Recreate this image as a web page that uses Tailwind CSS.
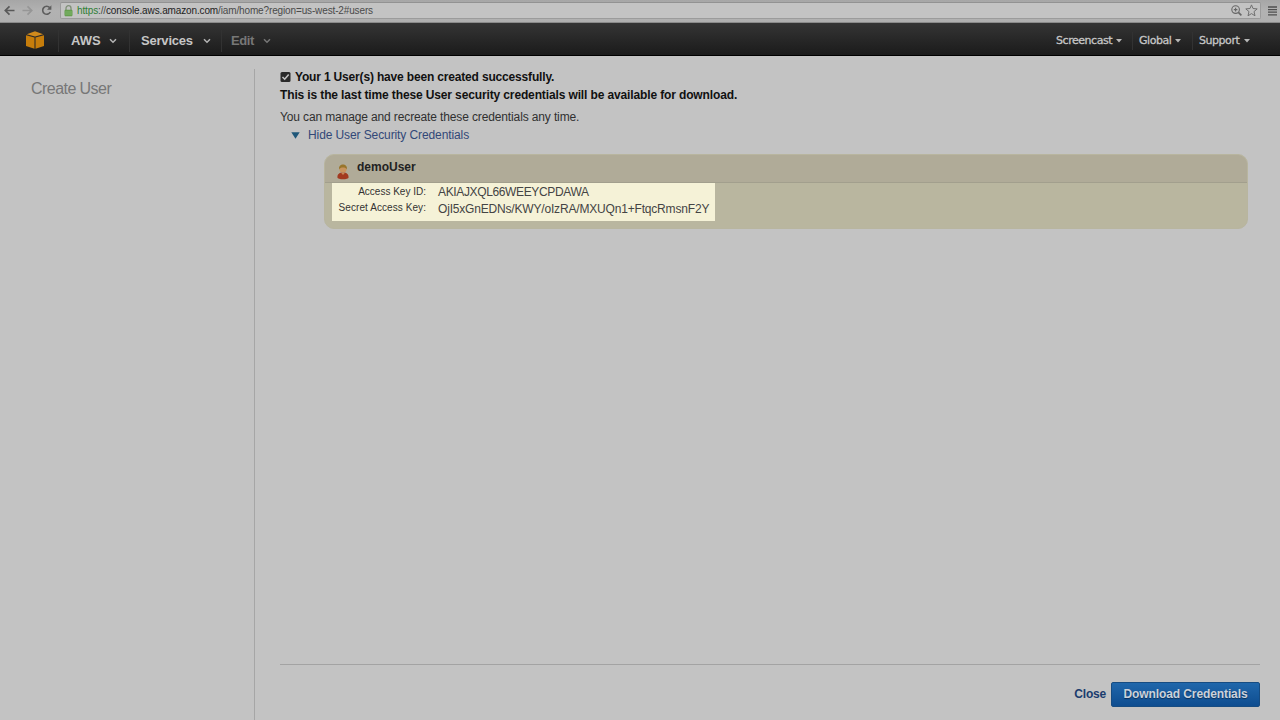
<!DOCTYPE html>
<html lang="en">
<head>
<meta charset="utf-8">
<title>IAM - Create User</title>
<script src="https://cdn.jsdelivr.net/npm/@tailwindcss/browser@4"></script>
</head>
<body class="w-[1280px] h-[720px] overflow-hidden bg-[#c3c3c3] flex flex-col font-['Liberation_Sans',Arial,sans-serif] text-[#222] whitespace-nowrap">
  <!-- Browser toolbar -->
  <div class="h-[23px] shrink-0 flex bg-gradient-to-b from-[#a6a6a6] via-[#b2b2b2] to-[#b0b0b0] border-b border-[#8b8b8b]">
    <div class="w-[60px] flex pl-[4px] pt-[5px] gap-[7px]">
      <svg class="w-[11px] h-[11px]" viewBox="0 0 11 11" fill="none" stroke="#595959" stroke-width="1.7"><path d="M10.5 5.5H1.5M5.5 1.3L1.3 5.5l4.2 4.2"/></svg>
      <svg class="w-[11px] h-[11px]" viewBox="0 0 11 11" fill="none" stroke="#969696" stroke-width="1.7"><path d="M.5 5.5h9M5.5 1.3l4.2 4.2-4.2 4.2"/></svg>
      <svg class="w-[12px] h-[11px] ml-[1px]" viewBox="0 0 12 11" fill="none" stroke="#5d5d5d" stroke-width="1.6"><path d="M8.700 2.600A4 4 0 1 0 9.300 7"/><path d="M10.400 .3v4.400H6z" fill="#5d5d5d" stroke="none"/></svg>
    </div>
    <div class="w-[1201px] h-[17px] mt-[2px] flex items-center bg-[#c3c3c3] border border-[#9b9b9b] border-t-[#929292] rounded-[2px] pl-[3px] pr-[2px]">
      <svg class="w-[9px] h-[12px] shrink-0" viewBox="0 0 9 12"><path d="M2 6V3.2a2.5 2.5 0 0 1 5 0V6" fill="none" stroke="#7f8f78" stroke-width="1.3"/><rect x=".8" y="5" width="7.4" height="6" rx=".8" fill="#69a352" stroke="#5c9447" stroke-width=".5"/><path d="M1 7h7M1 9h7" stroke="#85b772" stroke-width=".7"/></svg>
      <span class="ml-[4px] mt-[1px] text-[10px] leading-[14px] tracking-[-0.135px] text-[#4a4a4a]"><span class="text-[#2f7f35]">https</span>://<span class="text-[#222]">console.aws.amazon.com</span>/iam/home?region=us-west-2#users</span>
      <svg class="w-[11px] h-[11px] ml-auto" viewBox="0 0 11 11" fill="none" stroke="#666" stroke-width="1.1"><circle cx="4.6" cy="4.6" r="3.8"/><path d="M7.4 7.4l3 3" stroke-width="1.6"/><path d="M2.8 4.6h3.6M4.6 2.8v3.6"/></svg>
      <svg class="w-[13px] h-[13px] ml-[3px]" viewBox="0 0 13 13" fill="none" stroke="#707070" stroke-width="1"><path d="M6.500.9l1.500 3.600 4.200.4-3.200 2.700 1 4.200-3.500-2.200-3.500 2.200 1-4.200L.8 4.900l4.200-.4z"/></svg>
    </div>
    <svg class="w-[9px] h-[10px] ml-[7px] mt-[6px]" viewBox="0 0 9 10" stroke="#4f4f4f" stroke-width="1.3"><path d="M0 1h9M0 3.600h9M0 6.200h9M0 8.800h9"/></svg>
  </div>
  <!-- Console navigation -->
  <div class="h-[33px] shrink-0 flex items-center bg-gradient-to-b from-[#353535] to-[#1b1b1b] border-b border-black text-[#c6c6c6] text-[13px] font-bold pt-[3px]">
    <svg class="w-[18px] h-[18px] ml-[26px] -mt-[2px]" viewBox="0 0 18 18"><path d="M.8 3.300L9 .2l8.200 3.100L9 5.600z" fill="#d08a1c"/><path d="M0 4.200l8.500 2.300v11.300L0 15zM18 4.200L9.500 6.500v11.300L18 15z" fill="#c67d0b"/></svg>
    <div class="w-px h-[22px] ml-[14px] bg-[#323232]"></div>
    <span class="w-[30px] ml-[12px]">AWS</span>
    <svg class="w-[8px] h-[6px] ml-[8px]" viewBox="0 0 8 6" fill="none" stroke="#b5b5b5" stroke-width="1.5"><path d="M1 1.2l3 3 3-3"/></svg>
    <div class="w-px h-[22px] ml-[12px] bg-[#323232]"></div>
    <span class="w-[52px] ml-[11px] tracking-[-0.2px]">Services</span>
    <svg class="w-[8px] h-[6px] ml-[10px]" viewBox="0 0 8 6" fill="none" stroke="#b5b5b5" stroke-width="1.5"><path d="M1 1.2l3 3 3-3"/></svg>
    <div class="w-px h-[22px] ml-[10px] bg-[#323232]"></div>
    <span class="w-[23px] ml-[9px] text-[#777] tracking-[-0.4px]">Edit</span>
    <svg class="w-[8px] h-[6px] ml-[9px]" viewBox="0 0 8 6" fill="none" stroke="#777" stroke-width="1.5"><path d="M1 1.2l3 3 3-3"/></svg>
    <div class="ml-auto mr-[30px] mt-[1px] flex items-center font-['DejaVu_Sans'] font-normal text-[11px] tracking-[-0.45px] [-webkit-text-stroke:0.3px_#c6c6c6]">
      <span class="w-[56px]">Screencast</span>
      <svg class="w-[6px] h-[4px] ml-[4px]" viewBox="0 0 6 4" fill="#b8b8b8"><path d="M0 0h6L3 3.6z"/></svg>
      <div class="w-px h-[18px] ml-[10px] bg-[#323232]"></div>
      <span class="w-[32px] ml-[6px]">Global</span>
      <svg class="w-[6px] h-[4px] ml-[4px]" viewBox="0 0 6 4" fill="#b8b8b8"><path d="M0 0h6L3 3.6z"/></svg>
      <div class="w-px h-[18px] ml-[11px] bg-[#323232]"></div>
      <span class="w-[40px] ml-[6px]">Support</span>
      <svg class="w-[6px] h-[4px] ml-[5px]" viewBox="0 0 6 4" fill="#b8b8b8"><path d="M0 0h6L3 3.6z"/></svg>
    </div>
  </div>
  <div class="flex-1 flex min-h-0">
    <aside class="w-[255px] pl-[31px] pt-[22px] relative">
      <h1 class="text-[16px] leading-[22px] tracking-[-0.55px] text-[#777]">Create User</h1>
      <div class="absolute right-0 top-[13px] bottom-0 w-px bg-[#a6a6a6]"></div>
    </aside>
    <main class="flex-1 flex flex-col pl-[25px] pr-[20px] pt-[12px]">
      <div class="flex items-center h-[18px] text-[12px] tracking-[-0.17px] font-bold text-[#111]">
        <svg class="w-[11px] h-[10px] mr-[4px]" viewBox="0 0 11 10"><rect x=".5" width="10" height="10" rx="1.5" fill="#2a2a2a"/><path d="M2.5 5l2.2 2.2 4-4.6" fill="none" stroke="#c3c3c3" stroke-width="1.6"/></svg>
        <span>Your 1 User(s) have been created successfully.</span>
      </div>
      <p class="h-[18px] leading-[18px] text-[12px] tracking-[-0.13px] font-bold text-[#111]">This is the last time these User security credentials will be available for download.</p>
      <p class="mt-[4px] h-[18px] leading-[18px] text-[12px] tracking-[-0.13px] text-[#303030]">You can manage and recreate these credentials any time.</p>
      <div class="flex items-center h-[18px] pl-[11px] text-[12px] tracking-[-0.1px] text-[#324878]">
        <svg class="w-[9px] h-[7px] mr-[8px]" viewBox="0 0 9 7" fill="#1f5779"><path d="M.3 .2h8.400L4.500 6.800z"/></svg>
        <span>Hide User Security Credentials</span>
      </div>
      <section class="ml-[44px] mr-[12px] mt-[10px] h-[75px] rounded-[10px] overflow-hidden bg-[#b9b69f] border border-[#b8b59f]">
        <div class="h-[28px] flex bg-[#b0ab98] border-b border-[#a29f8d]">
          <svg class="w-[12px] h-[16px] ml-[12px] mt-[9px]" viewBox="0 0 12 16"><path d="M.4 13.400C.4 10 2.600 8.600 6 8.600s5.600 1.400 5.600 4.800c0 2.400-11.200 2.400-11.200 0z" fill="#a23a20"/><path d="M4 8.800l2 2.200 2-2.200z" fill="#c88a58"/><circle cx="6" cy="5" r="3.600" fill="#c9945e"/><path d="M2.200 5.400C1.400 2 3.800.4 6 .4s4.600 1.600 3.800 5C9 4 8 3.600 6 3.600S3 4 2.200 5.400z" fill="#98762c"/></svg>
          <span class="ml-[8px] mt-[3px] leading-[18px] text-[12px] font-bold text-[#222]">demoUser</span>
        </div>
        <div class="ml-[7px] w-[383px] h-[38px] bg-[#f5f2d7] text-[#333]">
          <div class="flex h-[17px]"><span class="w-[94px] shrink-0 text-right text-[10px] leading-[17px]">Access Key ID:</span><span class="ml-[12px] text-[12px] leading-[19px] tracking-[-0.36px] text-[#444]">AKIAJXQL66WEEYCPDAWA</span></div>
          <div class="flex h-[17px]"><span class="w-[94px] shrink-0 text-right text-[10px] leading-[15px] tracking-[0.07px]">Secret Access Key:</span><span class="ml-[12px] text-[12px] leading-[18px] tracking-[-0.18px] text-[#444]">OjI5xGnEDNs/KWY/oIzRA/MXUQn1+FtqcRmsnF2Y</span></div>
        </div>
      </section>
      <footer class="mt-auto h-[56px] border-t border-[#a3a3a3] flex justify-end items-start pt-[17px]">
        <a class="mr-[5px] leading-[24px] text-[12px] tracking-[-0.2px] font-bold text-[#1b3c6e]">Close</a>
        <button class="w-[149px] h-[25px] rounded-[2px] border border-[#164c82] bg-gradient-to-b from-[#2067ab] to-[#0e4d90] text-[12px] tracking-[-0.1px] leading-[23px] font-bold text-[#cbd2db] [text-shadow:0_1px_1px_#0a3058]">Download Credentials</button>
      </footer>
    </main>
  </div>
</body>
</html>
